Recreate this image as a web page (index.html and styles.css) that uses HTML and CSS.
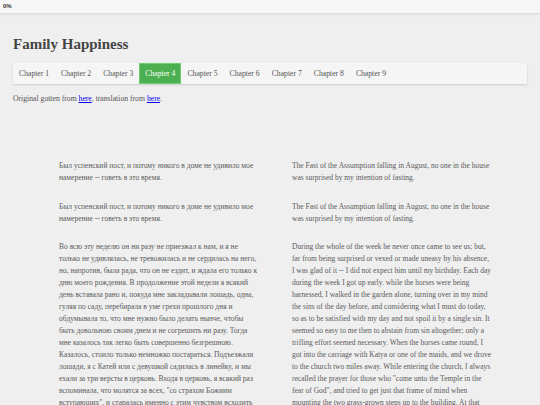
FILE: index.html
```html
<!DOCTYPE html>
<html>
<head>
<meta charset="utf-8">
<link rel="stylesheet" href="styles.css">
</head>
<body>
<div class="progress">0%</div>
<div class="page">
  <h1 class="title">Family Happiness</h1>
  <nav class="chapters">
    <a class="chapter">Chapter 1</a>
    <a class="chapter">Chapter 2</a>
    <a class="chapter">Chapter 3</a>
    <a class="chapter active">Chapter 4</a>
    <a class="chapter">Chapter 5</a>
    <a class="chapter">Chapter 6</a>
    <a class="chapter">Chapter 7</a>
    <a class="chapter">Chapter 8</a>
    <a class="chapter">Chapter 9</a>
  </nav>
  <p class="source">Original gotten from <a href="#" class="link">here</a>, translation from <a href="#" class="link">here</a>.</p>
  <div class="parallel">
    <p class="para">Был успенский пост, и потому никого в доме не удивило мое намерение -- говеть в это время.</p>
    <p class="para">The Fast of the Assumption falling in August, no one in the house was surprised by my intention of fasting.</p>
    <p class="para">Был успенский пост, и потому никого в доме не удивило мое намерение -- говеть в это время.</p>
    <p class="para">The Fast of the Assumption falling in August, no one in the house was surprised by my intention of fasting.</p>
    <p class="para">Во всю эту неделю он ни разу не приезжал к нам, и я не только не удивлялась, не тревожилась и не сердилась на него, но, напротив, была рада, что он не ездит, и ждала его только к дню моего рождения. В продолжение этой недели я всякий день вставала рано и, покуда мне закладывали лошадь, одна, гуляя по саду, перебирала в уме грехи прошлого дня и обдумывала то, что мне нужно было делать нынче, чтобы быть довольною своим днем и не согрешить ни разу. Тогда мне казалось так легко быть совершенно безгрешною. Казалось, стоило только немножко постараться. Подъезжали лошади, я с Катей или с девушкой садилась в линейку, и мы ехали за три версты в церковь. Входя в церковь, я всякий раз вспоминала, что молятся за всех, "со страхом Божиим вступающих", и старалась именно с этим чувством всходить по двум поросшим травой ступеням паперти.</p>
    <p class="para">During the whole of the week he never once came to see us; but, far from being surprised or vexed or made uneasy by his absence, I was glad of it -- I did not expect him until my birthday. Each day during the week I got up early. while the horses were being harnessed, I walked in the garden alone, turning over in my mind the sins of the day before, and considering what I must do today, so as to be satisfied with my day and not spoil it by a single sin. It seemed so easy to me then to abstain from sin altogether; only a trifling effort seemed necessary. When the horses came round, I got into the carriage with Katya or one of the maids, and we drove to the church two miles away. While entering the church, I always recalled the prayer for those who "come unto the Temple in the fear of God", and tried to get just that frame of mind when mounting the two grass-grown steps up to the building. At that moment there were not many worshippers in the church.</p>
  </div>
</div>
</body>
</html>
```
FILE: styles.css
```css
html, body {
  margin: 0;
  padding: 0;
  background: #efefef;
  font-family: "Liberation Serif", "Times New Roman", serif;
  color: #555;
  overflow: hidden;
  height: 405px;
}
.progress {
  height: 13px;
  background: #f6f6f6;
  box-shadow: 0 1px 3px rgba(0,0,0,0.12);
  font-family: "Liberation Sans", Arial, sans-serif;
  font-weight: bold;
  font-size: 6px;
  line-height: 13px;
  padding-left: 3px;
  color: #333;
}
.page {
  padding: 0 13px;
}
.title {
  margin: 21px 0 0 0;
  font-size: 15px;
  line-height: 20px;
  font-weight: bold;
  color: #444;
}
.chapters {
  display: flex;
  margin-top: 9px;
  width: 514px;
  height: 21px;
  background: #f5f5f5;
  box-shadow: 0 1px 2px rgba(0,0,0,0.15);
}
.chapter {
  padding: 0 6px;
  font-size: 7.7px;
  line-height: 21px;
  color: #555;
  white-space: nowrap;
}
.chapter.active {
  background: #4caf50;
  color: #fff;
  box-shadow: inset 0 0 0 1px #6ccf70;
}
.source {
  margin: 9px 0 0 0;
  font-size: 7.7px;
  line-height: 12px;
  color: #555;
}
.link {
  color: #0000ee;
}
.parallel {
  display: grid;
  grid-template-columns: 200px 200px;
  column-gap: 33px;
  row-gap: 16.5px;
  margin: 55px 0 0 46px;
}
.para {
  margin: 0;
  font-size: 7.5px;
  line-height: 12px;
  color: #5a5a5a;
}
```
